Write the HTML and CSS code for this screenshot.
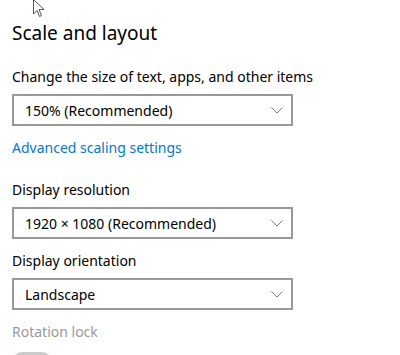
FILE: index.html
```html
<!DOCTYPE html>
<html lang="en">
<head>
    <meta charset="UTF-8">
    <title>Scale and layout</title>
    <link rel="stylesheet" href="styles.css">
</head>
<body>
    <div class="page">
        <h2 class="section-title">Scale and layout</h2>

        <div class="field">
            <label class="field-label">Change the size of text, apps, and other items</label>
            <div class="combo">
                <span>150% (Recommended)</span>
                <svg class="chevron" width="12" height="7" viewBox="0 0 12 7"><path d="M0.5 0.5 L6 6 L11.5 0.5" fill="none" stroke="#777" stroke-width="1"/></svg>
            </div>
        </div>

        <a class="link" href="#">Advanced scaling settings</a>

        <div class="field">
            <label class="field-label">Display resolution</label>
            <div class="combo">
                <span>1920 × 1080 (Recommended)</span>
                <svg class="chevron" width="12" height="7" viewBox="0 0 12 7"><path d="M0.5 0.5 L6 6 L11.5 0.5" fill="none" stroke="#777" stroke-width="1"/></svg>
            </div>
        </div>

        <div class="field">
            <label class="field-label">Display orientation</label>
            <div class="combo">
                <span>Landscape</span>
                <svg class="chevron" width="12" height="7" viewBox="0 0 12 7"><path d="M0.5 0.5 L6 6 L11.5 0.5" fill="none" stroke="#777" stroke-width="1"/></svg>
            </div>
        </div>

        <div class="field disabled">
            <label class="field-label">Rotation lock</label>
            <div class="toggle"></div>
        </div>
    </div>

    <svg class="cursor" width="13" height="19" viewBox="0 0 13 19">
        <path d="M0.5 0.5 L0.5 15 L4 11.5 L6.5 17.5 L8.5 16.5 L6 10.5 L11 10.5 Z" fill="#fff" stroke="#555" stroke-width="1"/>
    </svg>
</body>
</html>
```

FILE: styles.css
```css
body {
    margin: 0;
    background-color: #fff;
    font-family: "Noto Sans", "Open Sans", sans-serif;
    color: #000;
    overflow: hidden;
}
.page {
    padding: 19px 12px 0 12px;
}
.section-title {
    font-size: 19px;
    font-weight: 400;
    margin: 0 0 20px 0;
    line-height: 28px;
}
.field {
    display: flex;
    flex-direction: column;
    align-items: flex-start;
    gap: 7px;
    margin-bottom: 12px;
}
.field-label {
    font-size: 14px;
    line-height: 20px;
}
.combo {
    box-sizing: border-box;
    width: 281px;
    height: 32px;
    border: 2px solid #999;
    display: flex;
    align-items: center;
    justify-content: space-between;
    padding: 0 8px 0 11px;
    font-size: 14px;
}
.chevron {
    display: block;
}
.link {
    display: block;
    font-size: 14px;
    line-height: 20px;
    color: #0078d7;
    text-decoration: none;
    margin: 1px 0 22px 0;
}
.disabled .field-label {
    color: #999;
}
.toggle {
    width: 40px;
    height: 20px;
    border-radius: 10px;
    background-color: #ccc;
    margin-top: 3px;
}
.cursor {
    position: absolute;
    left: 33px;
    top: -1px;
}
```
